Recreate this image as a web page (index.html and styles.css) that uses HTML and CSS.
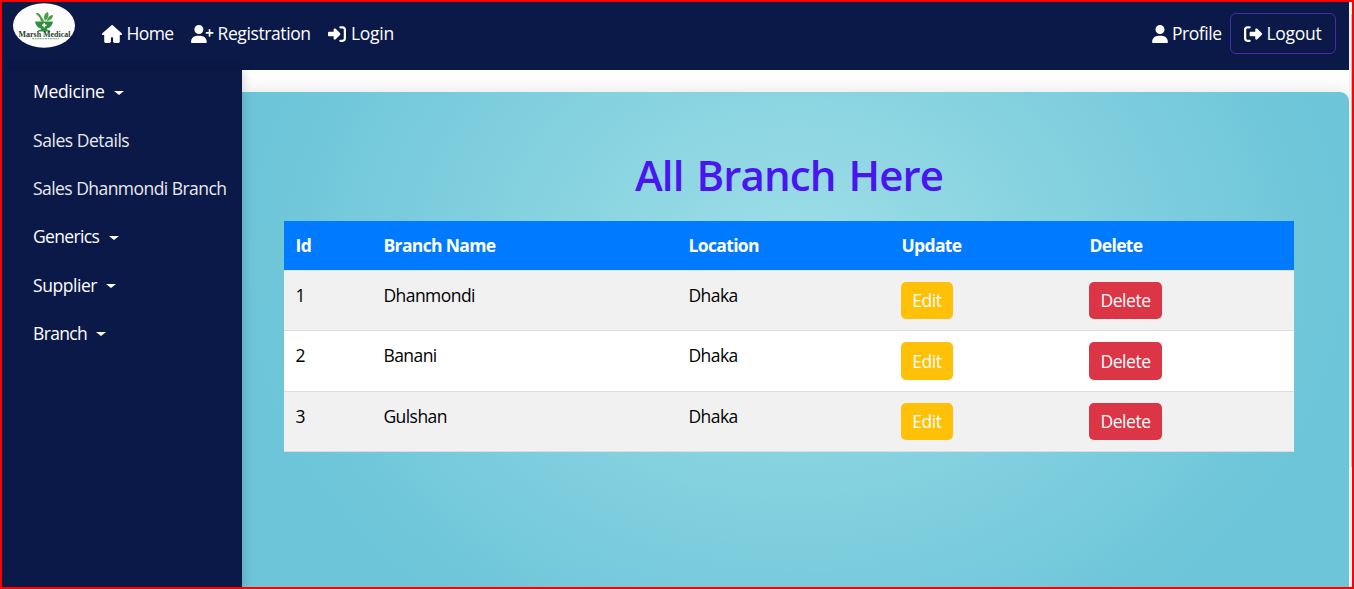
FILE: index.html
```html
<!DOCTYPE html>
<html lang="en">
<head>
<meta charset="utf-8">
<title>Marsh Medical</title>
<link rel="stylesheet" href="styles.css">
</head>
<body>
<div class="frame">
  <div class="page">
    <header class="navbar">
      <svg class="logo" viewBox="0 0 62 45" width="62" height="45">
        <ellipse cx="31" cy="22.500" rx="31" ry="22.300" fill="#fdfdfd"/>
        <path d="M22.500 10.500q3-1.500 4.500 1l4.500 7h-3.500q-1-5-5.500-8zM31 15q0-5 4-6 2 5-3 9zM34 17q2-5 6-5 0 5-6 6z" fill="#4c9e47"/>
        <path d="M22 18.500h18q-1 6-6 7v1l3 1v1H25v-1l3-1v-1q-5-1-6-7z" fill="#2f8f3e"/>
        <path d="M30.500 20h1.500v1.500h1.500V23H32v1.500h-1.500V23H29v-1.500h1.500z" fill="#fff"/>
        <text class="logo-name" x="5.500" y="33.500" textLength="52" lengthAdjust="spacingAndGlyphs">Marsh Medical</text>
        <path d="M19 35.700h27" stroke="#8fbd8b" stroke-width="1.300" stroke-dasharray="2 .6" fill="none"/>
      </svg>
      <nav class="links">
        <a class="link home"><svg width="20" height="18" viewBox="0 0 576 512"><path d="M575.800 255.500c0 18-15 32.100-32 32.100h-32l.7 160.200c0 2.700-.2 5.400-.5 8.100V472c0 22.100-17.900 40-40 40H360c-22 0-40-18-40-40v-88c0-17.700-14.300-32-32-32s-32 14.300-32 32v88c0 22-18 40-40 40H104c-22 0-40-18-40-40V287.600H32c-18 0-32-14-32-32.100 0-9 3-17 10-24L266.400 8c7-7 15-8 22-8s15 2 21 7l255.400 224.500c8 7 12 15 11 24z"/></svg><span>Home</span></a>
        <a class="link registration"><svg width="22.500" height="18" viewBox="0 0 640 512"><path d="M96 128a128 128 0 1 1 256 0 128 128 0 1 1-256 0zM0 482.300C0 383.800 79.800 304 178.300 304h91.400c98.500 0 178.300 79.800 178.300 178.300 0 16.400-13.300 29.700-29.700 29.700H29.700C13.300 512 0 498.700 0 482.300zM504 312v-64h-64a24 24 0 0 1 0-48h64v-64a24 24 0 0 1 48 0v64h64a24 24 0 0 1 0 48h-64v64a24 24 0 0 1-48 0z"/></svg><span>Registration</span></a>
        <a class="link login"><svg width="18" height="18" viewBox="0 0 512 512"><path d="M217.900 105.900 340.700 228.700a38.600 38.600 0 0 1 0 54.600L217.900 406.100c-6.400 6.400-15 9.900-24 9.900-18.700 0-33.900-15.200-33.900-33.900V320H32c-17.700 0-32-14.300-32-32v-64c0-17.700 14.300-32 32-32h128v-62.100c0-18.700 15.200-33.900 33.900-33.900 9 0 17.600 3.600 24 9.900zM352 416h64c17.700 0 32-14.300 32-32V128c0-17.700-14.300-32-32-32h-64a32 32 0 0 1 0-64h64c53 0 96 43 96 96v256c0 53-43 96-96 96h-64a32 32 0 0 1 0-64z"/></svg><span>Login</span></a>
      </nav>
      <div class="account">
        <a class="link profile"><svg width="16" height="18" viewBox="0 0 448 512"><path d="M224 256a128 128 0 1 0 0-256 128 128 0 1 0 0 256zm-45.700 48C79.800 304 0 383.800 0 482.300 0 498.700 13.300 512 29.700 512h388.600c16.400 0 29.700-13.300 29.700-29.700 0-98.500-79.800-178.300-178.300-178.300z"/></svg><span>Profile</span></a>
        <a class="link logout"><svg width="18" height="18" viewBox="0 0 512 512"><path d="M377.900 105.900 500.700 228.700a38.600 38.600 0 0 1 0 54.600L377.900 406.100c-6.400 6.400-15 9.900-24 9.900-18.700 0-33.900-15.200-33.900-33.900V320H192c-17.700 0-32-14.300-32-32v-64c0-17.700 14.300-32 32-32h128v-62.100c0-18.700 15.200-33.900 33.900-33.900 9 0 17.600 3.600 24 9.900zM160 96H96c-17.700 0-32 14.300-32 32v256c0 17.700 14.300 32 32 32h64a32 32 0 0 1 0 64H96c-53 0-96-43-96-96V128c0-53 43-96 96-96h64a32 32 0 0 1 0 64z"/></svg><span>Logout</span></a>
      </div>
    </header>
    <div class="body">
      <aside class="sidebar">
        <a class="item medicine"><span>Medicine</span><i class="caret"></i></a>
        <a class="item dim details"><span>Sales Details</span></a>
        <a class="item dim"><span>Sales Dhanmondi Branch</span></a>
        <a class="item generics"><span>Generics</span><i class="caret"></i></a>
        <a class="item supplier"><span>Supplier</span><i class="caret"></i></a>
        <a class="item branch"><span>Branch</span><i class="caret"></i></a>
      </aside>
      <main class="content">
        <section class="card">
          <h1 class="title">All Branch Here</h1>
          <table class="branches">
            <colgroup><col class="c-id"><col class="c-name"><col class="c-location"><col class="c-update"><col class="c-delete"></colgroup>
            <thead><tr><th>Id</th><th>Branch Name</th><th>Location</th><th>Update</th><th>Delete</th></tr></thead>
            <tbody>
              <tr><td>1</td><td>Dhanmondi</td><td>Dhaka</td><td><button class="btn edit">Edit</button></td><td><button class="btn delete">Delete</button></td></tr>
              <tr><td>2</td><td>Banani</td><td>Dhaka</td><td><button class="btn edit">Edit</button></td><td><button class="btn delete">Delete</button></td></tr>
              <tr><td>3</td><td>Gulshan</td><td>Dhaka</td><td><button class="btn edit">Edit</button></td><td><button class="btn delete">Delete</button></td></tr>
            </tbody>
          </table>
        </section>
      </main>
    </div>
  </div>
  <div class="scrollbar"><div class="thumb"></div></div>
</div>
</body>
</html>
```
FILE: styles.css
```css
* { box-sizing: border-box; }
body { margin: 0; font-family: "Open Sans", "Noto Sans", sans-serif; font-size: 17.5px; line-height: 27px; letter-spacing: -0.55px; color: #000; }
.frame { display: flex; width: 1354px; height: 589px; border: 2px solid #f00; overflow: hidden; background: #fff; }
.page { display: flex; flex-direction: column; width: 1347px; }
.scrollbar { width: 3px; padding: 12px 0 0 2px; background: #f1f1f1; }
.thumb { height: 453px; background: #c1c1c1; }
.navbar { display: flex; flex: none; height: 68px; background: #0b1948; color: #fff; }
.logo { flex: none; margin: 1px 0 0 11px; }
.logo-name { font: bold 8.5px "Liberation Serif", serif; letter-spacing: 0; fill: #263f2d; }
.links { display: flex; margin-left: 27px; padding-top: 18px; }
.link { display: flex; align-items: center; height: 27px; white-space: nowrap; letter-spacing: -0.3px; }
.link svg { flex: none; fill: #fff; }
.link span { margin-left: 5px; }
.home { width: 89px; letter-spacing: -0.6px; }
.home span { margin-left: 4.5px; }
.registration { width: 137px; letter-spacing: -0.4px; }
.registration span { margin-left: 4px; }
.account { display: flex; margin-left: auto; padding: 11px 13px 0 0; }
.profile { width: 78.5px; margin-top: 7px; letter-spacing: -0.45px; }
.profile span { margin-left: 4.5px; }
.logout { width: 106px; height: 41px; padding-left: 13px; border: 1px solid #4a2ab0; border-radius: 6px; }
.logout span { margin-left: 4.5px; }
.body { display: flex; flex: 1; }
.sidebar { flex: none; width: 240px; padding: 8px 0 0 31px; background: #0b1948; box-shadow: 2px 0 9px rgba(0,0,0,.15); z-index: 1; }
.item { display: flex; align-items: center; height: 27px; margin-bottom: 21.400px; color: #fff; white-space: nowrap; }
.medicine { margin-bottom: 21.600px; letter-spacing: -0.3px; }
.details { letter-spacing: -0.45px; }
.supplier { margin-bottom: 21.200px; letter-spacing: -0.45px; }
.generics, .branch { letter-spacing: -0.65px; }
.dim { color: #e9e9ee; }
.caret { margin: 2px 0 0 9.500px; border: 5px solid transparent; border-top-color: currentColor; border-bottom: 0; border-top-width: 4px; }
.supplier .caret, .branch .caret { margin-left: 9px; }
.content { flex: 1; padding-top: 22px; }
.card { height: 497px; padding: 56px 55px 0 42px; border-radius: 0 9px 0 0; background: radial-gradient(550px 440px at 50% 170px, #9edee7 0, #6cc5d8 100%); box-shadow: 0 0 20px rgba(0,0,0,.12); }
.title { height: 54px; margin: 0 0 19px; text-align: center; font-size: 42px; line-height: 54px; font-weight: 600; letter-spacing: -0.9px; word-spacing: 3px; color: #4916f0; }
.branches { width: 1010px; table-layout: fixed; border-collapse: collapse; }
.c-id { width: 88px; } .c-name { width: 305px; } .c-location { width: 213px; } .c-update { width: 188px; } .c-delete { width: 216px; }
.branches th { height: 49px; padding: 11px 11.500px 10px; background: #007bff; color: #fff; text-align: left; font-weight: 700; letter-spacing: -0.65px; border-bottom: 1px solid #dee2e6; }
.branches td { height: 60.500px; padding: 11px 11px 10px; padding-left: 11.400px; vertical-align: top; background: #f1f1f1; border-bottom: 1px solid #dcddde; }
.branches td:nth-child(n+4) { padding-left: 11px; }
.branches tbody tr:nth-child(2) td { background: #fff; }
.btn { display: block; height: 37px; padding: 0; border: 0; border-radius: 5px; color: #fff; font: inherit; letter-spacing: -0.45px; }
.branches tbody tr:nth-child(2) .btn { height: 38px; }
.edit { width: 52px; background: #ffc107; }
.delete { width: 73px; background: #dc3545; }
```
